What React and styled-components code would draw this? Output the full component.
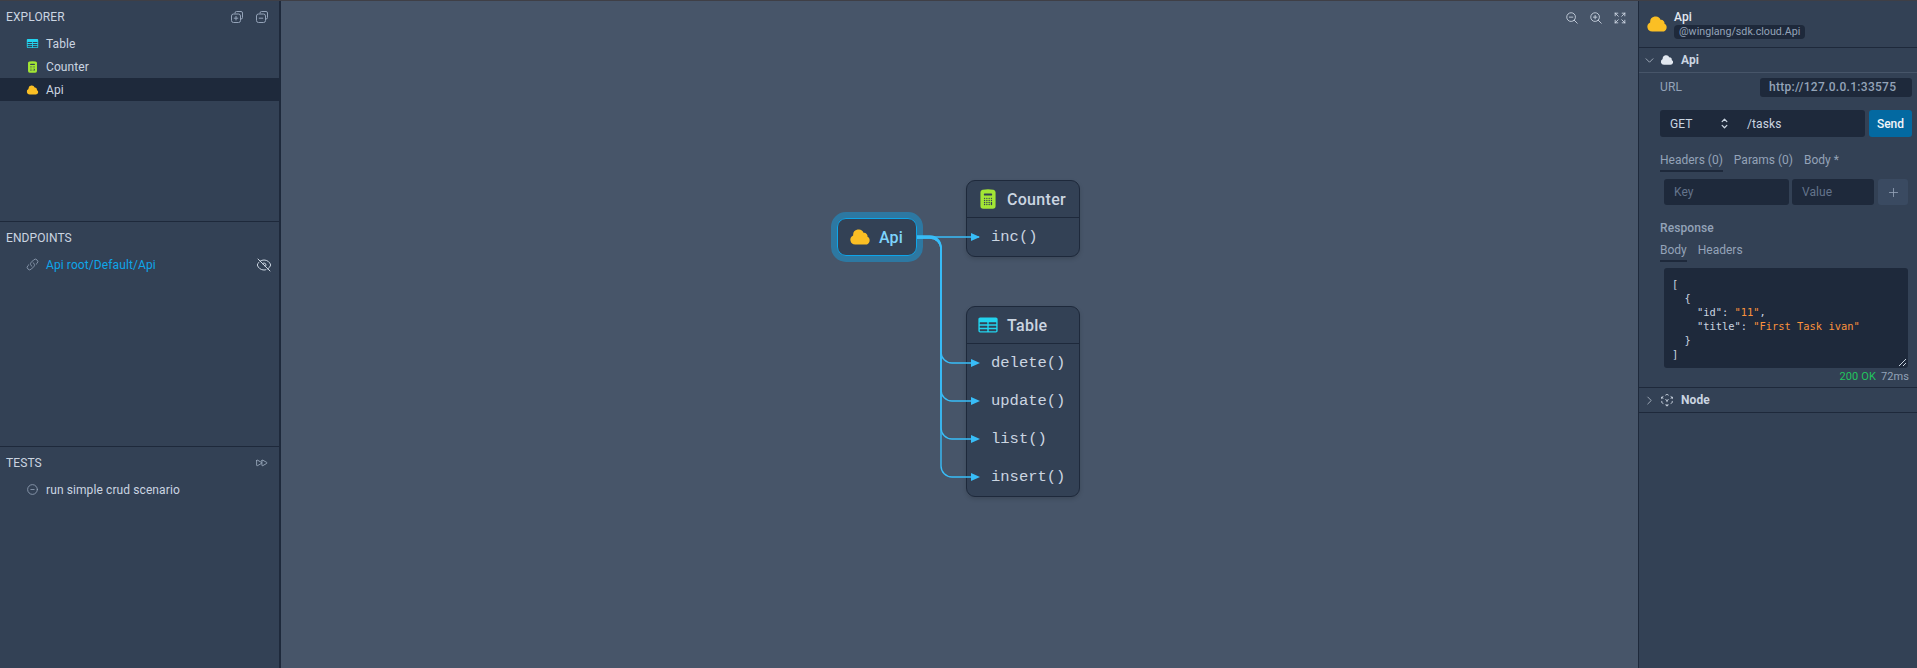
import styled, { createGlobalStyle } from 'styled-components';
import {
  HiCloud,
  HiTableCells,
  HiCalculator,
  HiOutlineEyeSlash,
  HiOutlineLink,
  HiOutlineMinusCircle,
  HiOutlineMagnifyingGlassPlus,
  HiOutlineMagnifyingGlassMinus,
  HiOutlineArrowsPointingOut,
  HiOutlineForward,
  HiOutlineChevronUpDown,
  HiOutlineCubeTransparent,
  HiOutlineChevronDown,
  HiOutlineChevronRight,
  HiOutlinePlus,
} from 'react-icons/hi2';

const SANS = '"Roboto", "Noto Sans", sans-serif';
const MONO = '"Liberation Mono", "DejaVu Sans Mono", monospace';
const CODE = '"DejaVu Sans Mono", "Liberation Mono", monospace';

const GlobalStyle = createGlobalStyle`
  html, body {
    margin: 0;
    padding: 0;
    background: #475569;
    overflow: hidden;
  }
  * {
    box-sizing: border-box;
  }
`;

function StackIcon({ minus }) {
  return (
    <svg width="12" height="12" viewBox="0 0 12 12" fill="none" stroke="#94a3b8" strokeWidth="1">
      <path d="M4 2.5V2a1.5 1.5 0 0 1 1.5-1.5H10A1.5 1.5 0 0 1 11.5 2v4.5A1.5 1.5 0 0 1 10 8h-.5" />
      <rect x="0.5" y="3" width="9" height="8.5" rx="2" />
      <path d="M2.8 7.2h4.4" />
      {!minus && <path d="M5 5v4.4" />}
    </svg>
  );
}

export default function App() {
  return (
    <Page>
      <GlobalStyle />
      <LeftPanel>
        <LeftSection $height={221}>
          <SectionHead>
            EXPLORER
            <HeadIcons>
              <StackIcon />
              <StackIcon minus />
            </HeadIcons>
          </SectionHead>
          <TreeRow>
            <IconSlot>
              <HiTableCells size={15} color="#22d3ee" />
            </IconSlot>
            Table
          </TreeRow>
          <TreeRow>
            <IconSlot>
              <HiCalculator size={16} color="#a3e635" />
            </IconSlot>
            Counter
          </TreeRow>
          <TreeRow $selected>
            <IconSlot>
              <HiCloud size={14} color="#fbbf24" />
            </IconSlot>
            Api
          </TreeRow>
        </LeftSection>
        <LeftSection $height={225}>
          <SectionHead>ENDPOINTS</SectionHead>
          <TreeRow $link>
            <IconSlot>
              <HiOutlineLink size={15} color="#94a3b8" />
            </IconSlot>
            Api root/Default/Api
            <RowEnd>
              <HiOutlineEyeSlash size={16} color="#cbd5e1" />
            </RowEnd>
          </TreeRow>
        </LeftSection>
        <LeftSection>
          <SectionHead>
            TESTS
            <HeadIcons>
              <HiOutlineForward size={13} color="#a3b1c4" />
            </HeadIcons>
          </SectionHead>
          <TreeRow>
            <IconSlot>
              <HiOutlineMinusCircle size={15} color="#94a3b8" />
            </IconSlot>
            run simple crud scenario
          </TreeRow>
        </LeftSection>
      </LeftPanel>

      <Canvas>
        <ZoomBar>
          <HiOutlineMagnifyingGlassMinus size={14} />
          <HiOutlineMagnifyingGlassPlus size={14} />
          <HiOutlineArrowsPointingOut size={14} />
        </ZoomBar>

        <ApiNode>
          <HiCloud size={22} color="#fbbf24" />
          Api
        </ApiNode>

        <ResourceNode $x={685} $y={180}>
          <NodeHead>
            <HiCalculator size={22} color="#a3e635" />
            Counter
          </NodeHead>
          <NodeMethod>inc()</NodeMethod>
        </ResourceNode>

        <ResourceNode $x={685} $y={306}>
          <NodeHead>
            <HiTableCells size={22} color="#22d3ee" />
            Table
          </NodeHead>
          <NodeMethod>delete()</NodeMethod>
          <NodeMethod>update()</NodeMethod>
          <NodeMethod>list()</NodeMethod>
          <NodeMethod>insert()</NodeMethod>
        </ResourceNode>

        <Edges width="1357" height="668" viewBox="281 0 1357 668" fill="none" stroke="#38bdf8" strokeWidth="1.4">
          <path d="M917 237H979" />
          <path d="M917 236H930a11 11 0 0 1 11 11V352a11 11 0 0 0 11 11h24" />
          <path d="M917 237H930a11 11 0 0 1 11 11V390a11 11 0 0 0 11 11h24" />
          <path d="M917 238H930a11 11 0 0 1 11 11V428a11 11 0 0 0 11 11h24" />
          <path d="M917 238H930a11 11 0 0 1 11 11V466a11 11 0 0 0 11 11h24" />
          <g fill="#38bdf8" stroke="none">
            <path d="M971 233L980 237L971 241Z" />
            <path d="M971 359L980 363L971 367Z" />
            <path d="M971 397L980 401L971 405Z" />
            <path d="M971 435L980 439L971 443Z" />
            <path d="M971 473L980 477L971 481Z" />
          </g>
        </Edges>
      </Canvas>

      <RightPanel>
        <InspectHead>
          <HiCloud size={22} color="#fbbf24" />
          <div>
            <InspectTitle>Api</InspectTitle>
            <TypeTag>@winglang/sdk.cloud.Api</TypeTag>
          </div>
        </InspectHead>

        <AccordionRow>
          <HiOutlineChevronDown size={11} color="#cbd5e1" />
          <HiCloud size={14} color="#e2e8f0" />
          Api
        </AccordionRow>

        <ApiBody>
          <UrlRow>
            <FieldLabel>URL</FieldLabel>
            <UrlValue>http://127.0.0.1:33575</UrlValue>
          </UrlRow>

          <RequestRow>
            <RequestBox>
              <MethodSelect>
                GET
                <HiOutlineChevronUpDown size={15} color="#cbd5e1" strokeWidth={2} />
              </MethodSelect>
              /tasks
            </RequestBox>
            <SendButton>Send</SendButton>
          </RequestRow>

          <Tabs>
            <Tab $active>Headers (0)</Tab>
            <Tab>Params (0)</Tab>
            <Tab>Body *</Tab>
          </Tabs>

          <KeyValueRow>
            <TextBox $width={125}>Key</TextBox>
            <TextBox $width={82}>Value</TextBox>
            <AddButton>
              <HiOutlinePlus size={13} />
            </AddButton>
          </KeyValueRow>

          <ResponseLabel>Response</ResponseLabel>
          <Tabs $tight>
            <Tab $active>Body</Tab>
            <Tab>Headers</Tab>
          </Tabs>

          <ResponseBox>
            <CodeLine>[</CodeLine>
            <CodeLine $indent={1}>{'{'}</CodeLine>
            <CodeLine $indent={2}>
              {'"id": '}
              <Str>"11"</Str>,
            </CodeLine>
            <CodeLine $indent={2}>
              {'"title": '}
              <Str>"First Task ivan"</Str>
            </CodeLine>
            <CodeLine $indent={1}>{'}'}</CodeLine>
            <CodeLine>]</CodeLine>
            <ResizeGrip width="9" height="9" viewBox="0 0 9 9" stroke="#cbd5e1" strokeWidth="1">
              <path d="M1 8L8 1M5 8L8 5" />
            </ResizeGrip>
          </ResponseBox>

          <StatusRow>
            <StatusOk>200 OK</StatusOk>
            72ms
          </StatusRow>
        </ApiBody>

        <AccordionRow $closed>
          <HiOutlineChevronRight size={11} color="#cbd5e1" />
          <HiOutlineCubeTransparent size={14} color="#cbd5e1" />
          Node
        </AccordionRow>
      </RightPanel>
    </Page>
  );
}

const Page = styled.div`
  display: flex;
  width: 1917px;
  height: 668px;
  overflow: hidden;
  border-top: 1px solid #3f3f46;
  font-family: ${SANS};
  font-size: 12px;
  letter-spacing: 0.1px;
  color: #cbd5e1;
`;

const LeftPanel = styled.aside`
  display: flex;
  flex-direction: column;
  flex: none;
  width: 281px;
  background: #334155;
  border-right: 2px solid #1e293b;
`;

const LeftSection = styled.section`
  flex: ${(p) => (p.$height ? `0 0 ${p.$height}px` : '1')};
  border-bottom: ${(p) => (p.$height ? '1px solid #1e293b' : 'none')};
`;

const SectionHead = styled.h2`
  display: flex;
  align-items: center;
  justify-content: space-between;
  height: 31px;
  margin: 0;
  padding: 0 11px 0 6px;
  font-size: 12px;
  font-weight: 400;
  color: #cbd5e1;
`;

const HeadIcons = styled.div`
  display: flex;
  align-items: center;
  gap: 13px;
`;

const TreeRow = styled.div`
  display: flex;
  align-items: center;
  gap: 7px;
  height: 23px;
  padding: 0 7px 0 26px;
  color: ${(p) => (p.$link ? '#0ea5e9' : '#cbd5e1')};
  background: ${(p) => (p.$selected ? '#1e293b' : 'transparent')};
`;

const IconSlot = styled.span`
  display: flex;
  align-items: center;
  justify-content: center;
  flex: none;
  width: 13px;
`;

const RowEnd = styled.span`
  display: flex;
  margin-left: auto;
`;

const Canvas = styled.main`
  position: relative;
  flex: none;
  width: 1358px;
  background: #475569;
  border-right: 1px solid #1e293b;
`;

const ZoomBar = styled.div`
  position: absolute;
  top: 10px;
  right: 11px;
  display: flex;
  gap: 10px;
  color: #cbd5e1;
`;

const Edges = styled.svg`
  position: absolute;
  top: -1px;
  left: 0;
`;

const ApiNode = styled.div`
  position: absolute;
  top: 217px;
  left: 556px;
  display: flex;
  align-items: center;
  gap: 8px;
  width: 80px;
  height: 38px;
  padding-left: 11px;
  border: 1px solid #0ea5e9;
  border-radius: 9px;
  outline: 6px solid rgba(14, 165, 233, 0.45);
  background: #334155;
  font-size: 16px;
  font-weight: 500;
  color: #7dd3fc;
`;

const ResourceNode = styled.div`
  position: absolute;
  top: ${(p) => p.$y - 1}px;
  left: ${(p) => p.$x}px;
  width: 114px;
  background: #334155;
  border: 1px solid #1e293b;
  border-radius: 9px;
  box-shadow: 0 2px 4px rgba(0, 0, 0, 0.15);
`;

const NodeHead = styled.div`
  display: flex;
  align-items: center;
  gap: 8px;
  height: 37px;
  padding-left: 10px;
  border-bottom: 1px solid #1e293b;
  font-size: 16px;
  font-weight: 500;
  letter-spacing: 0.3px;
  color: #cbd5e1;
`;

const NodeMethod = styled.div`
  display: flex;
  align-items: center;
  height: 38px;
  padding-left: 24px;
  font-family: ${MONO};
  font-size: 15.5px;
  letter-spacing: 0;
  color: #cbd5e1;
`;

const RightPanel = styled.aside`
  flex: 1;
  min-width: 0;
  background: #334155;
`;

const InspectHead = styled.header`
  display: flex;
  align-items: center;
  gap: 6px;
  height: 47px;
  padding-left: 7px;
  border-bottom: 1px solid #1e293b;
`;

const InspectTitle = styled.div`
  font-size: 12px;
  font-weight: 500;
  line-height: 15px;
  color: #e2e8f0;
`;

const TypeTag = styled.div`
  height: 14px;
  padding: 0 5px;
  border-radius: 4px;
  background: #1e293b;
  font-size: 10.7px;
  line-height: 14px;
  letter-spacing: 0;
  color: #94a3b8;
`;

const AccordionRow = styled.div`
  display: flex;
  align-items: center;
  gap: 5px;
  height: ${(p) => (p.$closed ? '26px' : '25px')};
  padding-left: 5px;
  border-top: ${(p) => (p.$closed ? '1px solid #1e293b' : 'none')};
  border-bottom: 1px solid ${(p) => (p.$closed ? '#1e293b' : '#475569')};
  font-size: 12px;
  font-weight: 700;
  color: #cbd5e1;

  svg:nth-child(2) {
    margin-right: 2px;
  }
`;

const ApiBody = styled.div`
  padding: 4px 5px 0 21px;
`;

const UrlRow = styled.div`
  display: flex;
  align-items: center;
  justify-content: space-between;
  height: 20px;
`;

const FieldLabel = styled.span`
  color: #94a3b8;
`;

const UrlValue = styled.span`
  width: 152px;
  height: 19px;
  padding-left: 9px;
  border-radius: 3px;
  background: #1e293b;
  font-size: 12px;
  font-weight: 500;
  line-height: 19px;
  letter-spacing: 0.3px;
  color: #94a3b8;
`;

const RequestRow = styled.div`
  display: flex;
  gap: 4px;
  height: 27px;
  margin-top: 13px;
`;

const RequestBox = styled.div`
  display: flex;
  align-items: center;
  flex: 1;
  border-radius: 3px;
  background: #1e293b;
  color: #cbd5e1;
`;

const MethodSelect = styled.div`
  display: flex;
  align-items: center;
  justify-content: space-between;
  width: 87px;
  padding: 0 15px 0 10px;
  color: #cbd5e1;
`;

const SendButton = styled.button`
  width: 43px;
  padding: 0;
  border: 0;
  border-radius: 3px;
  background: #0369a1;
  font-family: ${SANS};
  font-size: 12px;
  font-weight: 500;
  color: #f1f5f9;
`;

const Tabs = styled.div`
  display: flex;
  gap: 11px;
  margin-top: ${(p) => (p.$tight ? '7px' : '16px')};
  letter-spacing: 0;
`;

const Tab = styled.div`
  height: 19px;
  line-height: 15px;
  border-bottom: 2px solid ${(p) => (p.$active ? '#1e293b' : 'transparent')};
  color: #94a3b8;
`;

const KeyValueRow = styled.div`
  display: flex;
  gap: 3px;
  margin-top: 7px;
  padding-left: 4px;
`;

const TextBox = styled.div`
  width: ${(p) => p.$width}px;
  height: 26px;
  padding-left: 10px;
  border-radius: 3px;
  background: #1e293b;
  line-height: 26px;
  color: #64748b;
`;

const AddButton = styled.div`
  display: flex;
  align-items: center;
  justify-content: center;
  width: 30px;
  height: 26px;
  margin-left: 1px;
  border-radius: 3px;
  background: #3a4a61;
  color: #94a3b8;
`;

const ResponseLabel = styled.div`
  margin-top: 16px;
  line-height: 15px;
  font-weight: 500;
  color: #94a3b8;
`;

const ResponseBox = styled.div`
  position: relative;
  width: 244px;
  height: 100px;
  margin: 6px 0 0 4px;
  padding: 8.5px 8px;
  border-radius: 3px;
  background: #1e293b;
`;

const CodeLine = styled.div`
  height: 14px;
  padding-left: ${(p) => (p.$indent || 0) * 12.5}px;
  font-family: ${CODE};
  font-size: 10.4px;
  line-height: 14px;
  letter-spacing: 0;
  white-space: pre;
  color: #cbd5e1;
`;

const Str = styled.span`
  color: #fb923c;
`;

const ResizeGrip = styled.svg`
  position: absolute;
  right: 1px;
  bottom: 1px;
`;

const StatusRow = styled.div`
  display: flex;
  justify-content: flex-end;
  gap: 5px;
  height: 19px;
  padding-right: 3px;
  font-size: 11px;
  line-height: 18px;
  color: #94a3b8;
`;

const StatusOk = styled.span`
  color: #22c55e;
`;
